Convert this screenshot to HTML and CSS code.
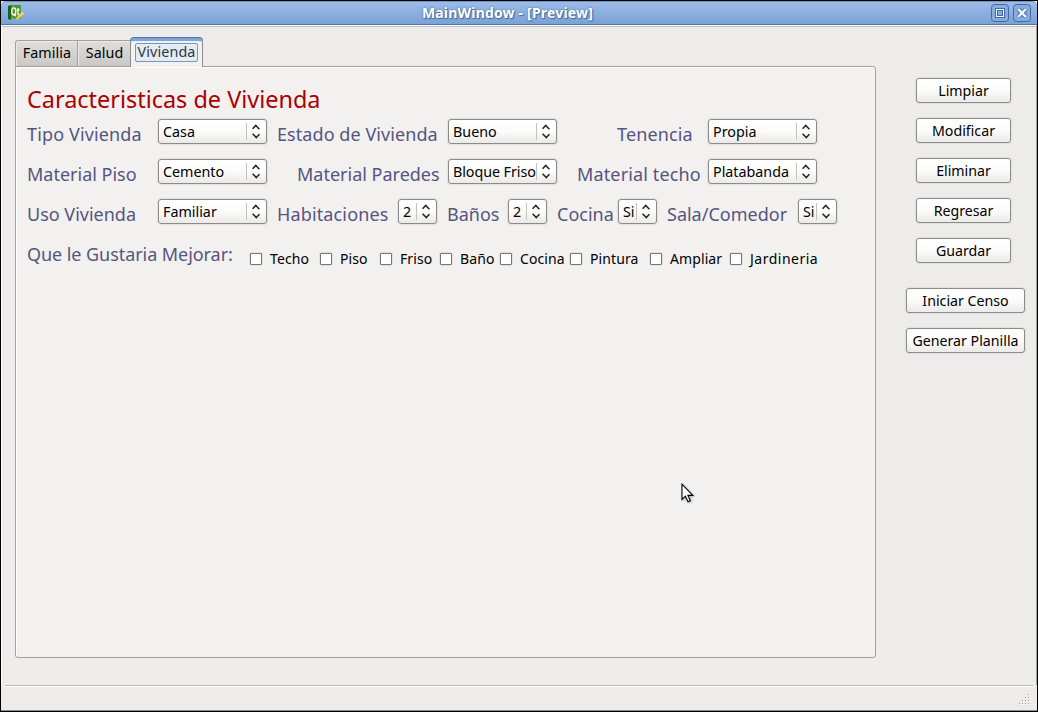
FILE: index.html
```html
<!DOCTYPE html>
<html lang="es">
<head>
<meta charset="utf-8">
<title>MainWindow - [Preview]</title>
<link rel="stylesheet" href="styles.css">
</head>
<body>
<div class="window">
  <header class="titlebar">
    <svg class="app-icon" width="16" height="16" viewBox="0 0 16 16">
      <path d="M0 1L3 0V15L0 14Z" fill="#235e16"/>
      <path d="M3 0H13V13.5H3Z" fill="#4c9a2a"/>
      <ellipse cx="5.8" cy="6.5" rx="2" ry="3.7" fill="none" stroke="#fff" stroke-width="1.3"/>
      <path d="M6 8.5L7.8 11.3M10 3V9.7H11.6M8.6 5H11.8" fill="none" stroke="#fff" stroke-width="1.2"/>
      <path d="M8 14.8L8.9 12L13.8 7L15.8 8.8L10.8 13.8Z" fill="#f5cf45"/>
      <path d="M13 7.8L13.8 7L15.8 8.8L15 9.6Z" fill="#e9e0c8"/>
    </svg>
    <h1 class="caption">MainWindow - [Preview]</h1>
    <div class="controls">
      <svg class="control" width="18" height="18" viewBox="0 0 18 18"><rect x=".5" y=".5" width="17" height="17" rx="3" fill="#86abdc" stroke="#3f699f"/><rect x="4" y="4" width="10" height="10" fill="#3f699f"/><rect x="5" y="5" width="8" height="8" fill="#f2f6fc"/><rect x="6.5" y="6.5" width="5" height="5" fill="#86abdc" stroke="#3f699f"/></svg>
      <svg class="control" width="18" height="18" viewBox="0 0 18 18"><rect x=".5" y=".5" width="17" height="17" rx="3" fill="#86abdc" stroke="#3f699f"/><path d="M5.2 5.2L12.8 12.8M12.8 5.2L5.2 12.8" stroke="#3f699f" stroke-width="4.2"/><path d="M5.2 5.2L12.8 12.8M12.8 5.2L5.2 12.8" stroke="#f2f6fc" stroke-width="2.4"/></svg>
    </div>
  </header>

  <main class="content">
    <section class="tabs">
      <nav class="tab-bar">
        <div class="tab tab-first">Familia</div>
        <div class="tab tab-second">Salud</div>
        <div class="tab tab-active"><span class="focus">Vivienda</span></div>
      </nav>
      <div class="panel">
        <h2 class="heading">Caracteristicas de Vivienda</h2>
        <div class="row row-type">
          <label class="label t-tipo">Tipo Vivienda</label><div class="combo"><span class="value">Casa</span><i class="arrows"></i></div>
          <label class="label t-estado">Estado de Vivienda</label><div class="combo"><span class="value">Bueno</span><i class="arrows"></i></div>
          <label class="label inset-60 t-tenencia">Tenencia</label><div class="combo"><span class="value">Propia</span><i class="arrows"></i></div>
        </div>
        <div class="row row-type">
          <label class="label">Material Piso</label><div class="combo"><span class="value">Cemento</span><i class="arrows"></i></div>
          <label class="label inset-30">Material Paredes</label><div class="combo"><span class="value v-bloque">Bloque Friso</span><i class="arrows"></i></div>
          <label class="label inset-20 t-techo">Material techo</label><div class="combo"><span class="value">Platabanda</span><i class="arrows"></i></div>
        </div>
        <div class="row row-use">
          <label class="label">Uso Vivienda</label><div class="combo"><span class="value">Familiar</span><i class="arrows"></i></div>
          <label class="label t-hab">Habitaciones</label><div class="combo"><span class="value">2</span><i class="arrows"></i></div>
          <label class="label">Baños</label><div class="combo"><span class="value">2</span><i class="arrows"></i></div>
          <label class="label">Cocina</label><div class="combo"><span class="value">Si</span><i class="arrows"></i></div>
          <label class="label">Sala/Comedor</label><div class="combo"><span class="value">Si</span><i class="arrows"></i></div>
        </div>
        <div class="row row-improve">
          <span class="label t-que">Que le Gustaria Mejorar:</span>
          <label class="check"><i class="box"></i>Techo</label>
          <label class="check"><i class="box"></i>Piso</label>
          <label class="check"><i class="box"></i>Friso</label>
          <label class="check"><i class="box"></i>Baño</label>
          <label class="check"><i class="box"></i>Cocina</label>
          <label class="check"><i class="box"></i>Pintura</label>
          <label class="check"><i class="box"></i>Ampliar</label>
          <label class="check t-jardin"><i class="box"></i>Jardineria</label>
        </div>
      </div>
    </section>
    <aside class="actions">
      <button class="button">Limpiar</button>
      <button class="button">Modificar</button>
      <button class="button">Eliminar</button>
      <button class="button">Regresar</button>
      <button class="button">Guardar</button>
      <button class="button wide first-wide">Iniciar Censo</button>
      <button class="button wide">Generar Planilla</button>
    </aside>
  </main>

  <footer class="statusbar">
    <svg width="12" height="12" viewBox="0 0 12 12"><g fill="#fff"><path d="M10 1h1v1h-1zM7 4h1v1h-1zM10 4h1v1h-1zM4 7h1v1h-1zM7 7h1v1h-1zM10 7h1v1h-1zM1 10h1v1h-1zM4 10h1v1h-1zM7 10h1v1h-1zM10 10h1v1h-1z"/></g><g fill="#a09e9b"><path d="M9 0h1v1h-1zM6 3h1v1h-1zM9 3h1v1h-1zM3 6h1v1h-1zM6 6h1v1h-1zM9 6h1v1h-1zM0 9h1v1h-1zM3 9h1v1h-1zM6 9h1v1h-1zM9 9h1v1h-1z"/></g></svg>
  </footer>
  <svg class="cursor" width="14" height="22" viewBox="0 0 14 22"><path d="M1 1.2V16.4L4.4 13.2L7 18.8L9.4 17.7L6.9 12.4H11.8Z" fill="#fff" stroke="#000" stroke-width="1.1"/></svg>
</div>
</body>
</html>
```

FILE: styles.css
```css
* { box-sizing: border-box; }
body {
  margin: 0;
  background: #000;
  font: 14.3px/20px "Noto Sans", "Open Sans", sans-serif;
  color: #000;
}
.window {
  position: relative;
  width: 1038px;
  height: 712px;
  display: flex;
  flex-direction: column;
  overflow: hidden;
  background: #edeceb;
  border: 1px solid #000;
  box-shadow: inset 0 -1px #8f8b87;
}
.titlebar {
  height: 24px;
  flex: none;
  display: flex;
  align-items: center;
  padding: 0 6px 0 7px;
  background: linear-gradient(#9cbce8, #7ba1d4);
  border-top: 1px solid #6f93c3;
  border-bottom: 1px solid #4b74ab;
  border-radius: 5px 5px 0 0;
}
.app-icon { flex: none; }
.caption {
  flex: 1;
  margin: 0;
  text-align: center;
  font-size: 14px;
  line-height: 22px;
  letter-spacing: .19px;
  font-weight: 700;
  color: #fff;
  text-shadow: 0 0 2px #41699d, 1px 1px 1px #41699d;
}
.controls { display: flex; gap: 4px; }
.content {
  flex: 1;
  display: flex;
  align-items: flex-start;
  border-top: 1px solid #fff;
  border-left: 1px solid #fff;
  border-right: 1px solid #a5a19c;
  box-shadow: inset 0 1px #c0bcb9;
}
.tabs { width: 861px; margin: 11px 0 0 13px; }
.tab-bar { display: flex; align-items: flex-end; height: 29px; }
.tab {
  height: 26px;
  text-align: center;
  line-height: 23px;
  letter-spacing: .08px;
  border: 1px solid #a3a09d;
  border-right: 0;
  border-bottom: 0;
  background: linear-gradient(#dedddb, #cbc9c7);
  box-shadow: inset 1px 1px #ebeae8;
}
.tab-first { width: 62px; padding-left: 1px; border-radius: 3px 0 0 0; }
.tab-second { width: 53px; padding-left: 1px; border-left: 1px solid #a3a09d; }
.tab-active {
  position: relative;
  width: 73px;
  height: 29px;
  margin-bottom: -1px;
  padding: 2px 4px;
  background: #f2f1f0;
  border: 1px solid #908e8b;
  border-top: 3px solid #7fa5d8;
  border-bottom: 0;
  border-radius: 4px 4px 0 0;
  box-shadow: 0 -1px #4c75ab;
}
.focus {
  display: block;
  height: 19px;
  line-height: 16px;
  letter-spacing: .12px;
  border: 1px solid #7497c4;
  border-radius: 2px;
  background: #e5ebf3;
  color: #2b3647;
}
.panel {
  height: 592px;
  padding: 19px 0 0 11px;
  background: #f2f1f0;
  border: 1px solid #a3a09d;
  border-radius: 0 3px 3px 3px;
  box-shadow: inset 1px 1px #fff;
}
.heading {
  margin: 0;
  height: 33px;
  line-height: 26px;
  font-size: 23.45px;
  font-weight: 400;
  color: #a00;
  white-space: nowrap;
}
.row { display: grid; height: 40px; align-items: start; white-space: nowrap; }
.row-type { grid-template-columns: 131px 109px 181px 109px 151px 109px; }
.row-use { grid-template-columns: 131px 109px 131px 39px 71px 39px 71px 39px 141px 39px; }
.row-improve { grid-template-columns: 223px 70px 60px 60px 60px 70px 80px 80px 100px; }
.label { font-size: 18px; line-height: 30px; color: #55557f; }
.combo + .label { padding-left: 10px; }
.combo + .inset-20 { padding-left: 20px; }
.combo + .inset-30 { padding-left: 30px; }
.combo + .inset-60 { padding-left: 60px; }
.t-tipo, .t-techo, .t-hab, .t-tenencia { letter-spacing: .14px; }
.t-estado { letter-spacing: .07px; }
.t-que { letter-spacing: -.06px; }
.combo {
  display: flex;
  height: 25px;
  border: 1px solid #8d8b88;
  border-radius: 3px;
  background: linear-gradient(#fff, #fbfbfa 50%, #ebeae8);
  box-shadow: 0 0 1px 1px #e2e0de;
}
.value { flex: 1; min-width: 0; padding-left: 4px; line-height: 23px; white-space: nowrap; }
.v-bloque { letter-spacing: -.06px; }
.arrows {
  width: 20px;
  margin: 3px 0;
  padding-right: 2px;
  border-left: 1px solid #c4c2bf;
  display: flex;
  flex-direction: column;
  align-items: center;
  justify-content: center;
  gap: 3px;
}
.arrows::before, .arrows::after {
  content: "";
  width: 6px;
  height: 6px;
  border: solid #222;
  border-width: 2px 0 0 2px;
  transform: translateY(2px) rotate(45deg) scale(.75);
}
.arrows::after { transform: translateY(-2px) rotate(225deg) scale(.75); }
.check { display: flex; align-items: center; height: 20px; margin-top: 10px; font-size: 14px; letter-spacing: .1px; }
.t-jardin { letter-spacing: .5px; }
.box {
  width: 12px;
  height: 12px;
  margin-right: 8px;
  background: #fff;
  border: 1px solid #777572;
  border-radius: 1px;
  box-shadow: 0 0 0 1px #e3e1df;
}
.actions {
  width: 119px;
  margin: 52px 0 0 30px;
  display: flex;
  flex-direction: column;
  align-items: center;
  gap: 15px;
}
.button {
  width: 95px;
  height: 25px;
  padding: 0;
  margin-right: 4px;
  font: inherit;
  font-size: 14.2px;
  line-height: 23px;
  color: #000;
  white-space: nowrap;
  border: 1px solid #8d8b88;
  border-radius: 3px;
  background: linear-gradient(#fff, #fbfbfa 50%, #ebeae8);
  box-shadow: 0 0 1px 1px #e2e0de;
}
.wide { width: 119px; margin-right: 0; }
.first-wide { margin-top: 10px; }
.statusbar {
  height: 26px;
  flex: none;
  margin: 0 4px;
  display: flex;
  justify-content: flex-end;
  padding: 8px 2px 0 0;
  border-top: 1px solid #bcb9b5;
  box-shadow: inset 0 1px #fff;
}
.cursor { position: absolute; left: 680px; top: 482px; filter: drop-shadow(1px 1px 1px #0004); }
```
